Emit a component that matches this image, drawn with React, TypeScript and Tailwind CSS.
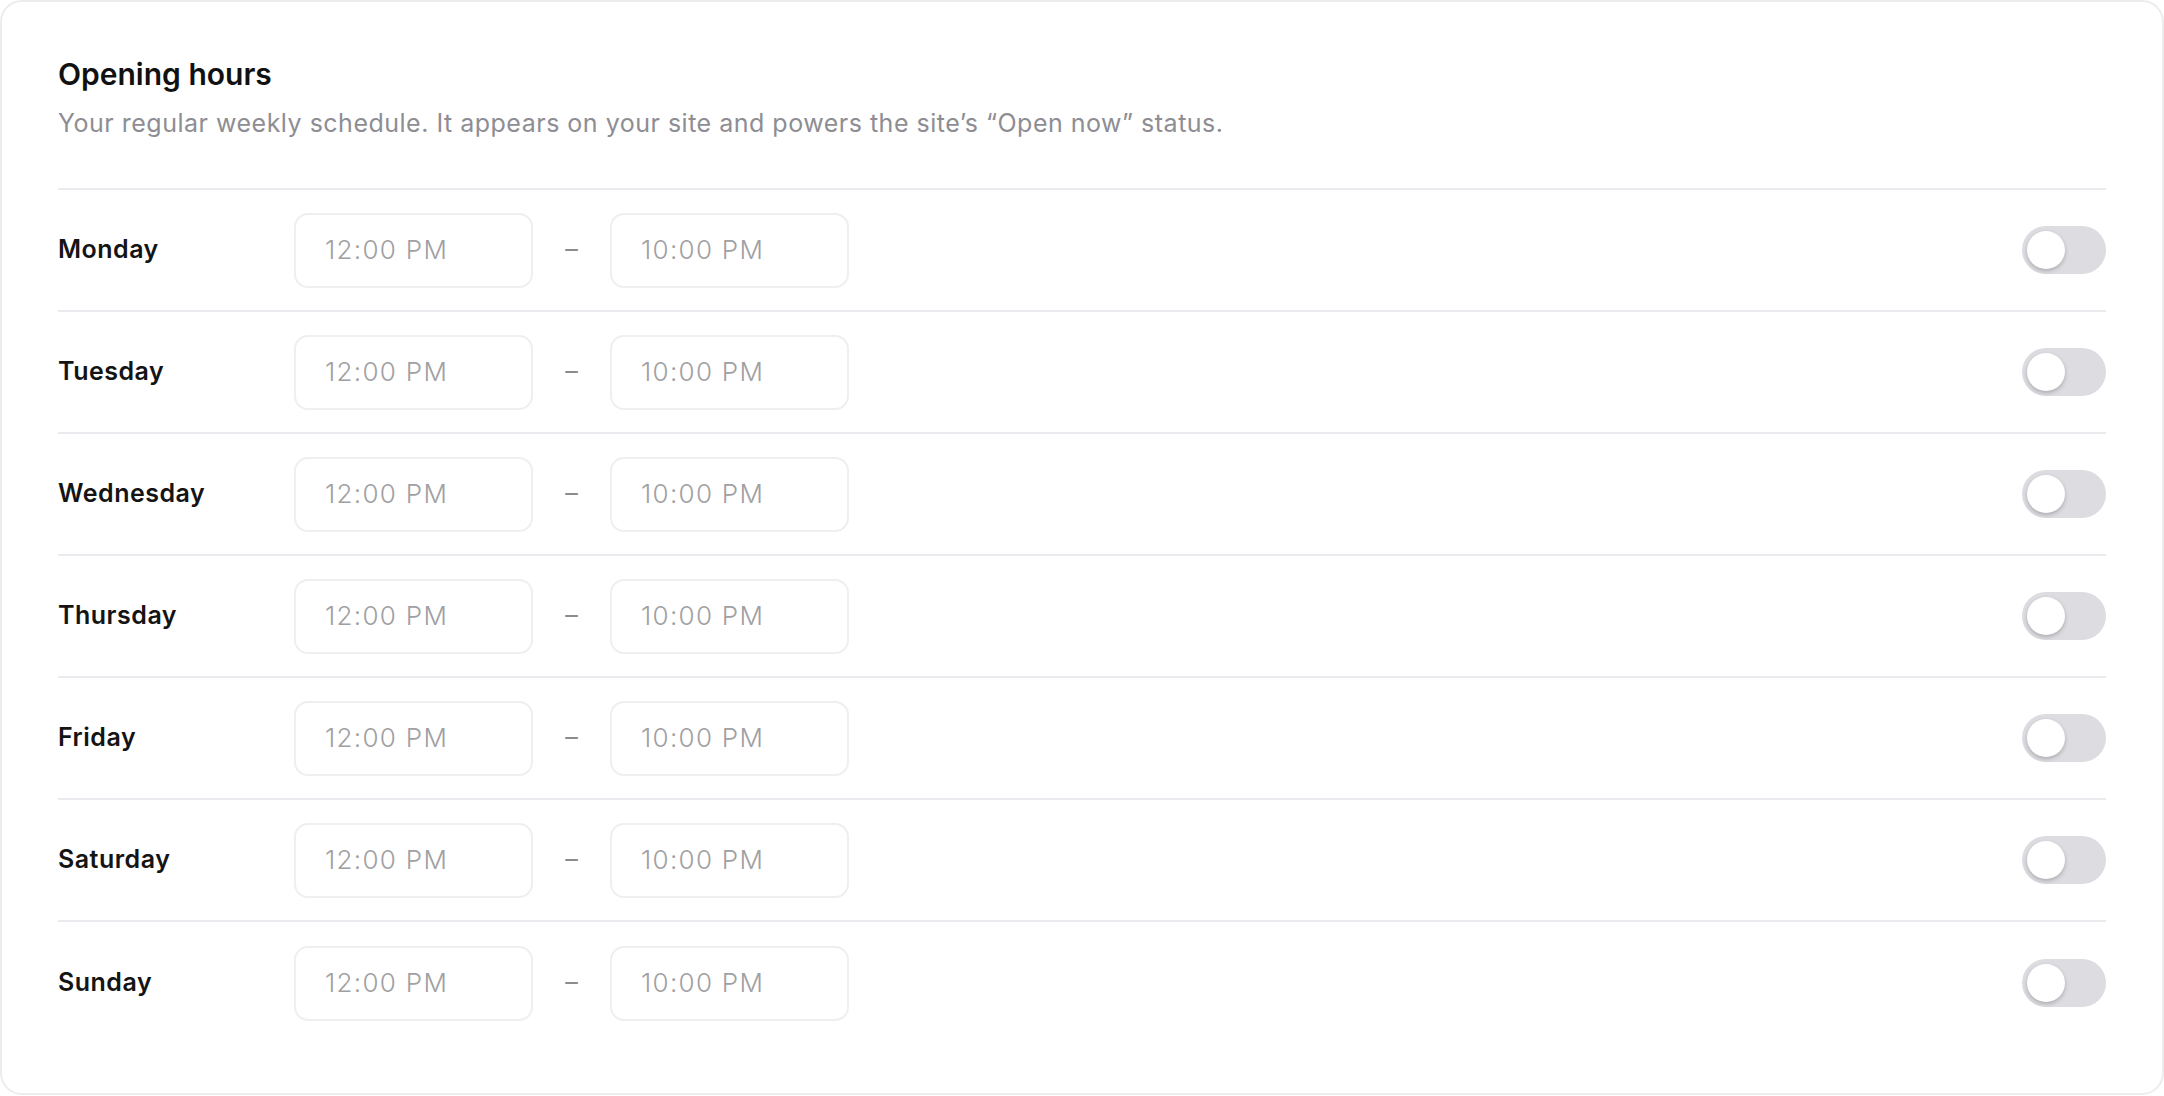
import React from "react";

const DAYS = ["Monday", "Tuesday", "Wednesday", "Thursday", "Friday", "Saturday", "Sunday"];

const TimeBox = ({ value }: { value: string }) => (
  <div className="flex h-[75px] w-[239px] items-center rounded-[14px] border-2 border-[#efeff1] px-[29px] pb-[2px] text-[26px] font-light tracking-[0.05em] text-[#a0a0a3]">
    {value}
  </div>
);

const Toggle = () => (
  <div className="ml-auto flex h-[48px] w-[84px] items-center rounded-full bg-[#dcdce1] px-[5px]">
    <div className="h-[38px] w-[38px] rounded-full bg-white shadow-[0_2px_4px_rgba(0,0,0,0.22)]" />
  </div>
);

const DayRow = ({ day, last }: { day: string; last: boolean }) => (
  <div className={`flex h-[122px] items-center ${last ? "" : "border-b-2 border-[#ebebef]"}`}>
    <div className="w-[236px] text-[25px] font-semibold tracking-[0.02em] text-[#141414]">{day}</div>
    <TimeBox value="12:00 PM" />
    <div className="flex w-[77px] justify-center text-[25px] text-[#8c8c90]">–</div>
    <TimeBox value="10:00 PM" />
    <Toggle />
  </div>
);

export default function App() {
  return (
    <div className="h-[1096px] w-[2164px] bg-white" style={{ fontFamily: "Inter, 'Noto Sans', sans-serif" }}>
      <div className="h-[1095px] rounded-[22px] border-2 border-[#ececec] px-[56px] pt-[52px]">
        <h2 className="text-[30px] font-semibold leading-[40px] text-[#111111]">Opening hours</h2>
        <p className="mt-[13px] text-[25px] leading-[32px] tracking-[0.02em] text-[#8d8d93]">
          Your regular weekly schedule. It appears on your site and powers the site’s “Open now” status.
        </p>
        <div className="mt-[49px] border-t-2 border-[#ebebef]">
          {DAYS.map((d, i) => (
            <DayRow key={d} day={d} last={i === DAYS.length - 1} />
          ))}
        </div>
      </div>
    </div>
  );
}
